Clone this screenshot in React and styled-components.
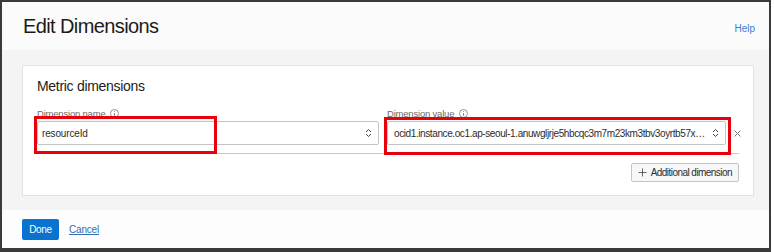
import React from 'react';
import styled, { createGlobalStyle } from 'styled-components';

const GlobalStyle = createGlobalStyle`
  html, body {
    margin: 0;
    padding: 0;
    background: #ffffff;
    font-family: "Liberation Sans", Arial, sans-serif;
  }
`;

const Frame = styled.div`
  width: 771px;
  height: 252px;
  box-sizing: border-box;
  border: 2px solid #3a3a3a;
  border-bottom-width: 4px;
  display: flex;
  flex-direction: column;
  background: #fbfbfb;
`;

const Header = styled.div`
  height: 48px;
  flex: none;
  display: flex;
  align-items: center;
  justify-content: space-between;
  padding: 0 14px 0 21px;
  background: #fbfbfb;
`;

const Title = styled.h1`
  margin: 0;
  font-size: 20px;
  font-weight: normal;
  line-height: 20px;
  letter-spacing: -0.6px;
  color: #1d1b19;
`;

const HelpLink = styled.a`
  margin-top: 4px;
  font-size: 10px;
  color: #3b7dd8;
  text-decoration: none;
`;

const Body = styled.div`
  height: 160px;
  flex: none;
  box-sizing: border-box;
  padding: 15px 15px 0 20px;
  background: #f4f4f4;
`;

const Card = styled.div`
  box-sizing: border-box;
  height: 131px;
  background: #ffffff;
  border: 1px solid #e2e2e2;
  padding: 12px 14px 0 14px;
  display: flex;
  flex-direction: column;
`;

const CardTitle = styled.h2`
  margin: 0;
  font-size: 14px;
  font-weight: normal;
  line-height: 16px;
  letter-spacing: -0.3px;
  color: #1d1b19;
`;

const Row = styled.div`
  margin-top: 14px;
  padding-bottom: 8px;
  border-bottom: 1px solid #c9c9c9;
  display: grid;
  grid-template-columns: 342px 339px 1fr;
  column-gap: 8px;
  align-items: end;
`;

const Field = styled.div`
  display: flex;
  flex-direction: column;
  gap: 2px;
`;

const Label = styled.div`
  display: flex;
  align-items: center;
  gap: 5px;
  font-size: 9.5px;
  line-height: 11px;
  letter-spacing: -0.2px;
  color: #6b6b6b;
`;

const SelectBox = styled.div`
  position: relative;
  box-sizing: border-box;
  height: 24px;
  border: 1px solid #c4c4c4;
  border-radius: 2px;
  background: #ffffff;
  display: flex;
  align-items: center;
  padding: 0 6px 0 ${p => p.$padLeft}px;
  font-size: 10px;
  color: #2c2c2c;
`;

const SelectText = styled.span`
  flex: 1;
  min-width: 0;
  white-space: nowrap;
  letter-spacing: ${p => p.$tight ? -0.4 : -0.15}px;
  padding-right: 2px;
`;

const Highlight = styled.div`
  position: absolute;
  box-sizing: border-box;
  left: -4px;
  top: ${p => p.$top}px;
  width: ${p => p.$width}px;
  height: 38px;
  border: 3px solid #e8000b;
  pointer-events: none;
`;

const RemoveButton = styled.div`
  height: 24px;
  display: flex;
  align-items: center;
  justify-content: flex-start;
  color: #777;
`;

const Actions = styled.div`
  display: flex;
  justify-content: flex-end;
  margin-top: 9px;
`;

const AddButton = styled.button`
  box-sizing: border-box;
  height: 19px;
  padding: 0 6px;
  display: flex;
  align-items: center;
  gap: 4px;
  border: 1px solid #c4c4c4;
  border-radius: 2px;
  background: #f7f7f7;
  font-family: "Liberation Sans", Arial, sans-serif;
  font-size: 10px;
  letter-spacing: -0.55px;
  color: #2c2c2c;
`;

const Footer = styled.div`
  flex: 1;
  display: flex;
  align-items: center;
  gap: 10px;
  padding: 0 0 0 20px;
  background: #fdfdfd;
`;

const DoneButton = styled.button`
  box-sizing: border-box;
  width: 37px;
  height: 21px;
  border: none;
  border-radius: 2px;
  background: #0a72cf;
  color: #ffffff;
  font-family: "Liberation Sans", Arial, sans-serif;
  font-size: 10px;
  letter-spacing: -0.3px;
  padding: 0;
`;

const CancelLink = styled.a`
  font-size: 10px;
  letter-spacing: -0.2px;
  color: #2f6fb7;
  text-decoration: underline;
`;

const InfoIcon = () => (
  <svg width="9" height="9" viewBox="0 0 9 9">
    <circle cx="4.5" cy="4.5" r="4" fill="none" stroke="#777" strokeWidth="0.8" />
    <line x1="4.5" y1="4" x2="4.5" y2="6.8" stroke="#777" strokeWidth="0.9" />
    <circle cx="4.5" cy="2.6" r="0.5" fill="#777" />
  </svg>
);

const UpDown = () => (
  <svg width="7" height="10" viewBox="0 0 7 10">
    <polyline points="1,4 3.5,1.5 6,4" fill="none" stroke="#444" strokeWidth="1" />
    <polyline points="1,6 3.5,8.5 6,6" fill="none" stroke="#444" strokeWidth="1" />
  </svg>
);

const CloseIcon = () => (
  <svg width="7" height="7" viewBox="0 0 7 7">
    <line x1="0.5" y1="0.5" x2="6.5" y2="6.5" stroke="#777" strokeWidth="1" />
    <line x1="6.5" y1="0.5" x2="0.5" y2="6.5" stroke="#777" strokeWidth="1" />
  </svg>
);

const PlusIcon = () => (
  <svg width="9" height="9" viewBox="0 0 9 9">
    <line x1="4.5" y1="0.5" x2="4.5" y2="8.5" stroke="#555" strokeWidth="0.9" />
    <line x1="0.5" y1="4.5" x2="8.5" y2="4.5" stroke="#555" strokeWidth="0.9" />
  </svg>
);

const App = () => {
  return (
    <>
      <GlobalStyle />
      <Frame>
        <Header>
          <Title>Edit Dimensions</Title>
          <HelpLink>Help</HelpLink>
        </Header>
        <Body>
          <Card>
            <CardTitle>Metric dimensions</CardTitle>
            <Row>
              <Field>
                <Label>Dimension name <InfoIcon /></Label>
                <SelectBox $padLeft={4}>
                  <SelectText>resourceId</SelectText>
                  <UpDown />
                  <Highlight $top={-6} $width={183} />
                </SelectBox>
              </Field>
              <Field>
                <Label>Dimension value <InfoIcon /></Label>
                <SelectBox $padLeft={6}>
                  <SelectText $tight>ocid1.instance.oc1.ap-seoul-1.anuwgljrje5hbcqc3m7m23km3tbv3oyrtb57x…</SelectText>
                  <UpDown />
                  <Highlight $top={-5} $width={347} />
                </SelectBox>
              </Field>
              <RemoveButton><CloseIcon /></RemoveButton>
            </Row>
            <Actions>
              <AddButton><PlusIcon />Additional dimension</AddButton>
            </Actions>
          </Card>
        </Body>
        <Footer>
          <DoneButton>Done</DoneButton>
          <CancelLink>Cancel</CancelLink>
        </Footer>
      </Frame>
    </>
  );
};

export default App;
